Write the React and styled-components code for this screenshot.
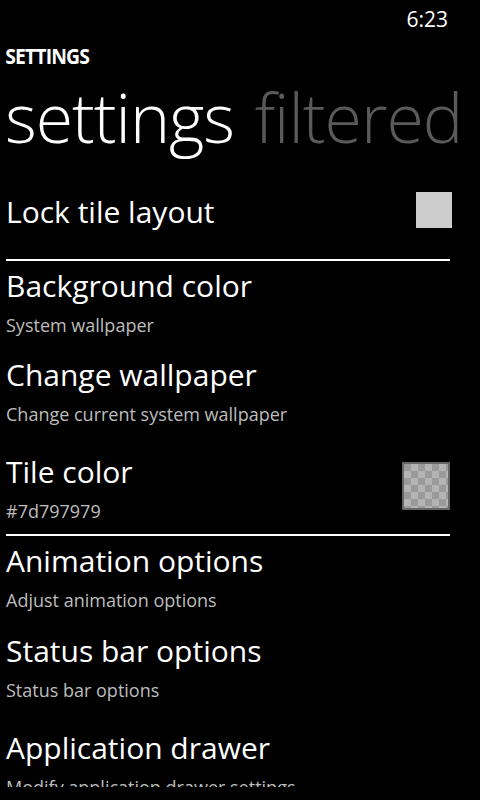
import React from 'react'
import styled, {createGlobalStyle} from 'styled-components'

const GlobalStyle = createGlobalStyle`
    html, body {
        margin: 0;
        padding: 0;
        background: #000;
    }
    body {
        font-family: "Open Sans", "DejaVu Sans", sans-serif;
        color: #fff;
    }
`

// height = distance to the next title, the reference spacing is a bit uneven
const items = [
    {title: 'Background color', sub: 'System wallpaper', h: 89},
    {title: 'Change wallpaper', sub: 'Change current system wallpaper', h: 97},
    {title: 'Tile color', sub: '#7d797979', swatch: true, divider: true, h: 82},
    {title: 'Animation options', sub: 'Adjust animation options', h: 90},
    {title: 'Status bar options', sub: 'Status bar options', h: 97},
    {title: 'Application drawer', sub: 'Modify application drawer settings', h: 90},
]

function App() {
    return (
        <Screen>
            <GlobalStyle/>
            <StatusBar>
                <Clock>6:23</Clock>
            </StatusBar>
            <AppName>SETTINGS</AppName>
            <PageTitle>
                settings <Dim>filtered</Dim>
            </PageTitle>
            <List>
                <ToggleRow>
                    <BigLabel>Lock tile layout</BigLabel>
                    <CheckBox/>
                </ToggleRow>
                <Divider/>
                {items.map((item) => (
                    <React.Fragment key={item.title}>
                        <Item $h={item.h}>
                            <Text>
                                <BigLabel>{item.title}</BigLabel>
                                <SubLabel>{item.sub}</SubLabel>
                            </Text>
                            {item.swatch && <Swatch/>}
                        </Item>
                        {item.divider && <Divider/>}
                    </React.Fragment>
                ))}
            </List>
        </Screen>
    )
}

export default App

const Screen = styled.div`
        width: 480px;
        height: 800px;
        background: #000;
        overflow: hidden;
`

const StatusBar = styled.div`
        height: 38px;
        display: flex;
        justify-content: flex-end;
        align-items: center;
        padding-right: 32px;
`

const Clock = styled.span`
        font-size: 21px;
        color: #fff;
`

const AppName = styled.div`
        font-size: 22px;
        font-weight: 700;
        letter-spacing: -1px;
        padding-left: 6px;
        height: 36px;
        line-height: 34px;
        transform: scaleX(0.88);
        transform-origin: left;
`

const PageTitle = styled.div`
        font-size: 68px;
        font-weight: 300;
        line-height: 85px;
        height: 85px;
        padding-left: 5px;
        letter-spacing: -1px;
        word-spacing: 4px;
        white-space: nowrap;
        margin-bottom: 21px;
`

const Dim = styled.span`
        color: #5a5a5a;
`

const List = styled.div`
        height: 607px;
        overflow: hidden;
        padding: 0 30px 0 6px;
`

const ToggleRow = styled.div`
        display: flex;
        justify-content: space-between;
        align-items: center;
        height: 60px;
        margin-bottom: 19px;

        ${'' /* label sits a touch lower than the box centre */}
        > div:first-child {
            padding-top: 3px;
        }
`

const CheckBox = styled.div`
        width: 36px;
        height: 36px;
        background: #cccccc;
        margin-right: -2px;
`

const Divider = styled.div`
        height: 2px;
        background: #fff;
        margin-bottom: 5px;
`

const Item = styled.div`
        display: flex;
        justify-content: space-between;
        align-items: flex-start;
        height: ${(p) => p.$h}px;
`

const Text = styled.div`
        display: flex;
        flex-direction: column;
`

const BigLabel = styled.div`
        font-size: 30px;
        line-height: 40px;
        color: #fff;
        white-space: nowrap;
`

const SubLabel = styled.div`
        font-size: 18px;
        line-height: 28px;
        margin-top: 5px;
        color: #bdbdbd;
        white-space: nowrap;
`

const Swatch = styled.div`
        width: 44px;
        height: 44px;
        margin-top: 10px;
        border: 2px solid #666;
        background-color: #9a9a9a;
        background-image:
            linear-gradient(45deg, #b4b4b4 25%, transparent 25%, transparent 75%, #b4b4b4 75%),
            linear-gradient(45deg, #b4b4b4 25%, transparent 25%, transparent 75%, #b4b4b4 75%);
        background-size: 14px 14px;
        background-position: 0 0, 7px 7px;
`
